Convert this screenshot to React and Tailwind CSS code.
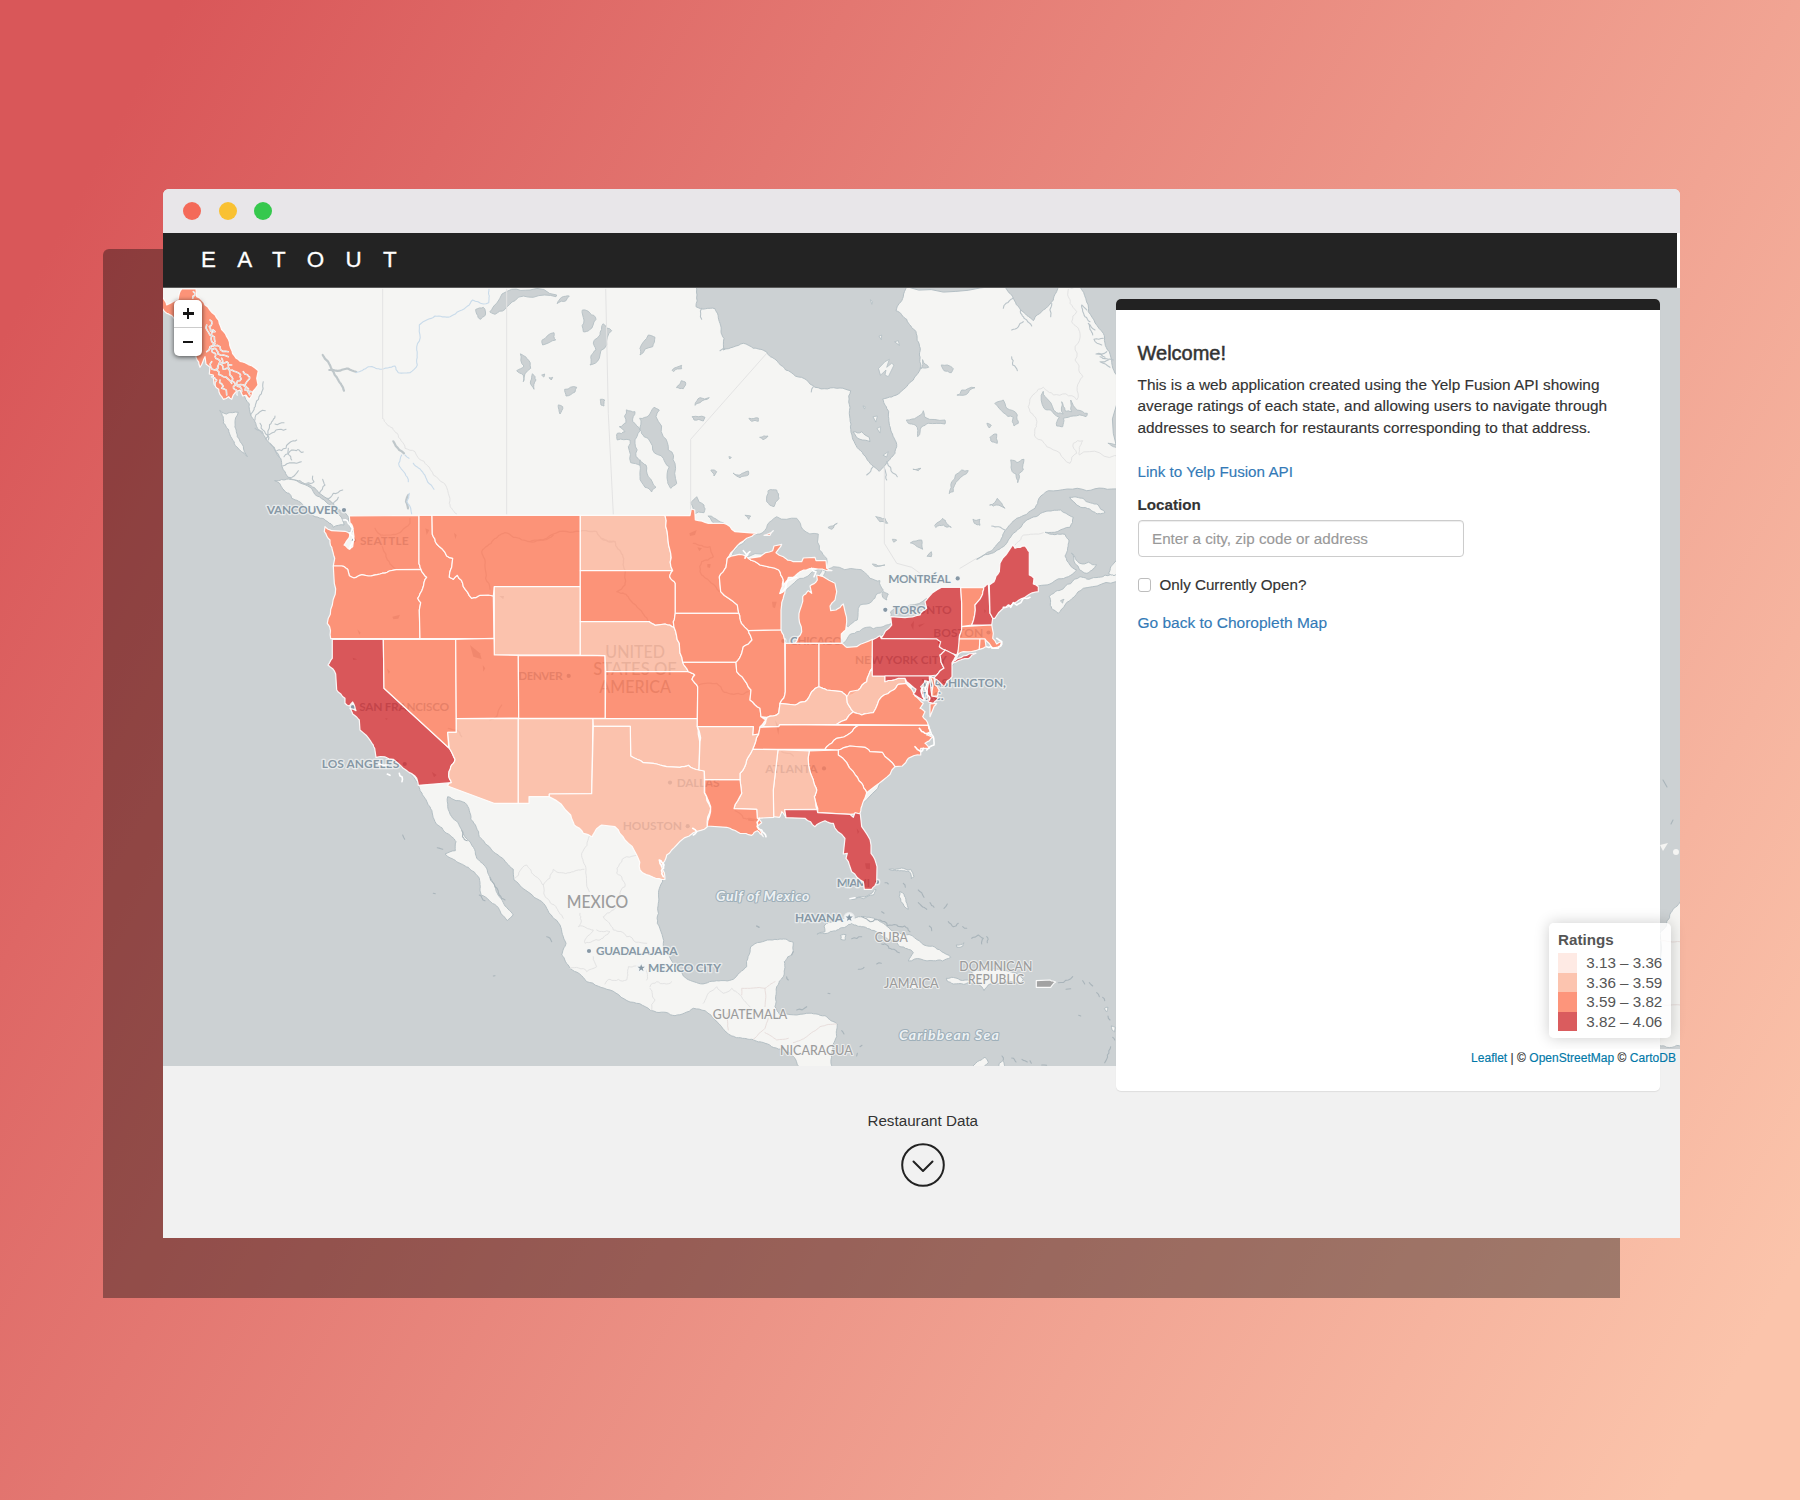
import React from "react";

/* ---------- geometry helpers ---------- */

// Origins of the survey sheets; sheet units are thirds of a pixel.
const NW = [160, 280];
const NE = [640, 280];
const W = [300, 490];
const E = [680, 490];
const S = [380, 780];
const SE = [740, 780];

function pts(...pairs) {
  const out = [];
  for (let i = 0; i < pairs.length; i += 2) {
    const [ox, oy] = pairs[i];
    for (const p of pairs[i + 1].trim().split(/\s+/)) {
      const [x, y] = p.split(",").map(Number);
      out.push([ox + x / 3, oy + y / 3]);
    }
  }
  return out;
}

function noise(a, b) {
  const v = Math.sin(a[0] * 12.9898 + a[1] * 78.233 + b[0] * 37.719 + b[1] * 11.137) * 43758.5453;
  return (v - Math.floor(v)) * 2 - 1;
}

function bend(a, b, amp, depth, borders) {
  const dx = b[0] - a[0];
  const dy = b[1] - a[1];
  const len = Math.hypot(dx, dy);
  if (depth === 0 || len < 3 || len > 130) return [];
  if (borders && depth === 2 && (Math.abs(dx) < 2 || Math.abs(dy) < 2 || len > 32)) return [];
  const flip = a[0] > b[0] || (a[0] === b[0] && a[1] > b[1]);
  const k = (flip ? -noise(b, a) : noise(a, b)) * amp;
  const m = [(a[0] + b[0]) / 2 - dy * k, (a[1] + b[1]) / 2 + dx * k];
  return [...bend(a, m, amp, depth - 1), m, ...bend(m, b, amp, depth - 1)];
}

function toPath(list, { amp = 0, depth = 3, closed = true, borders = false } = {}) {
  const out = [];
  list.forEach((p, i) => {
    out.push(p);
    const n = list[i + 1] || (closed ? list[0] : null);
    if (n && amp) out.push(...bend(p, n, amp, depth, borders));
  });
  return "M" + out.map((p) => p[0].toFixed(1) + " " + p[1].toFixed(1)).join("L") + (closed ? "Z" : "");
}

/* ---------- land and water ---------- */

const mainland = toPath(
  pts(
    NW, "-30,10 -30,90 9,85 60,90 130,150 200,230 240,300 262,365 268,372 272,405 290,440 318,478 345,510 362,535 366,560 385,592 420,602 450,615 478,640 500,655 525,680 548,694 566,712 578,755",
    W, "110,140 115,440 150,640 300,800 356,884",
    S, "115,15 130,48 150,80 168,130 200,160 228,185 226,212 195,222 230,245 265,262 298,295 303,345 350,378 382,422 400,405 370,368 345,320 322,270 290,235 270,185 245,150 215,110 203,80 203,50 255,68 268,92 272,118 298,170 335,210 360,230 400,268 402,300 450,340 500,385 540,435 558,490 545,525 570,565 620,605 690,630 760,667 830,697 885,707 940,685 975,692 1005,720 1035,752 1070,773 1115,778",
    SE, "75,790 130,808 165,835 185,870 278,870 275,820 290,770 292,732 255,707 200,700 120,705",
    S, "1185,680 1190,620 1210,590 1213,545 1238,520 1240,487 1200,477 1140,487 1112,500 1100,560 1060,598 1010,602 955,610 910,588 880,550 850,500 832,430 835,370 840,320 850,290",
    W, "1080,1100 1200,990",
    E, "220,970 400,960 530,960 640,820 735,720 690,600 800,540 860,440 930,390 970,340 1050,310",
    NE, "1195,918 1230,912 1285,890 1310,870 1290,855 1275,828 1287,780 1275,763 1215,757 1290,742 1300,712 1262,690 1215,695 1160,720 1120,760 1090,800 1055,820 1010,838 1055,812 1080,785 1095,752 1130,715 1185,685 1197,655 1225,632 1340,632 1440,630 1440,290 1425,280 1408,215 1390,160 1345,95 1320,20 1255,20 1240,60 1210,90 1180,122 1142,90 1120,55 1095,20 800,20 790,50 768,92 800,118 828,155 841,205 843,258 820,300 780,338 728,357 746,395 752,450 770,500 765,520 740,548 718,574 696,556 662,512 636,465 628,400 632,332 600,324 525,322 500,300 437,270 408,240 380,216 340,205 310,190 250,210 252,175 240,130 225,86 168,80 165,10"
  ),
  { amp: 0.09 }
);

const islands = [
  pts(NW, "345,602 385,597 450,622 478,650 505,672 530,690 552,735 520,742 480,715 430,680 395,655 372,630"),
  pts(NW, "180,392 200,402 235,397 225,430 232,470 262,530 235,505 210,465 190,430"),
  pts(NE, "640,456 665,455 688,472 690,485 660,478"),
  pts(NE, "1440,868 1395,885 1340,897 1320,890 1262,930 1228,950 1235,985 1255,1000 1275,975 1330,925 1440,905"),
  pts(NE, "1440,820 1425,845 1405,880 1440,885"),
  pts(NE, "1290,652 1330,655 1375,675 1395,697 1360,695 1310,675"),
  pts(NE, "1295,820 1320,850 1370,855 1340,880 1305,850"),
  pts(SE, "232,462 255,455 252,438 285,422 330,415 380,412 430,430 480,460 545,490 605,515 632,532 580,542 505,543 520,518 480,500 470,480 420,462 370,440 335,430 300,445 262,460"),
  pts(SE, "620,595 660,600 690,602 695,575 740,568 800,572 850,598 842,612 790,606 750,612 732,632 715,612 680,610 640,612 622,603"),
  pts(SE, "495,612 530,612 545,622 520,628"),
  pts(SE, "302,466 318,464 316,480 302,478"),
  pts(SE, "480,335 492,342 498,365 505,388 492,378 478,350"),
  pts(SE, "448,268 490,265 512,268 522,290 514,296 508,275 470,272"),
  pts(SE, "650,495 672,488 668,499 652,502"),
  pts(SE, "690,862 712,845 735,832 745,848 728,870 690,870"),
  pts(SE, "778,870 778,850 788,842 794,870"),
  pts(SE, "1094,685 1104,682 1100,696"),
  pts(SE, "1115,738 1126,742 1124,756 1116,750"),
  pts(SE, "332,358 365,350 395,340 408,328 400,345 370,356"),
  pts([1400, 760], "860,400 840,425 815,455 800,490 780,520 760,860 800,862 860,860"),
].map((p) => toPath(p, { amp: 0.14 }));

const lakes = [
  pts(E, "142,205 165,178 190,160 240,132 262,105 290,80 350,85 368,118 415,132 418,180 440,205 438,245 400,210 340,220 290,200 205,200"),
  pts(E, "440,240 460,230 530,238 570,265 600,272 610,300 590,312 575,335 540,345 532,390 505,410 490,400 440,365 470,320 465,280 430,262"),
  pts(E, "425,235 370,265 335,285 305,320 303,420 318,460 352,464 370,425 365,370 385,310 415,275"),
  pts(E, "484,465 505,440 530,425 560,412 600,412 635,400 625,425 578,452 530,476 500,474"),
  pts(E, "632,365 660,352 690,345 740,325 745,355 720,378 675,385 632,382"),
  pts(E, "610,305 625,312 620,330 608,322"),
  pts(NW, "990,95 1010,70 1055,28 1110,30 1190,45 1188,50 1120,52 1065,62 1035,88 1005,103"),
  pts(NW, "948,88 970,82 976,105 962,118 950,102"),
  pts(NW, "1192,70 1205,52 1228,48 1218,62"),
  pts(NW, "1268,90 1290,100 1308,118 1288,150 1270,155 1272,120"),
  pts(NW, "1330,132 1355,152 1340,195 1318,235 1290,255 1292,232 1308,210 1302,182 1320,165"),
  pts(NW, "1147,180 1182,158 1187,180 1148,195"),
  pts(NW, "1082,222 1100,235 1112,265 1090,305 1090,285 1070,272 1092,258"),
  pts(NW, "1118,282 1128,300 1122,328 1112,302"),
  pts(NW, "1215,328 1250,322 1245,336 1218,348"),
  pts(NW, "1196,375 1208,380 1200,402"),
  pts(NW, "1146,285 1154,282 1152,290"),
  pts(NW, "1168,293 1178,292 1174,300"),
  pts(NW, "1322,358 1334,360 1332,378 1323,375"),
  pts(NW, "1400,390 1425,395 1418,425 1440,452 1425,490 1428,530 1440,545 1440,556 1412,548 1405,500 1410,480 1372,480 1372,460 1395,455 1378,440 1398,428"),
  pts(NE, "0,415 25,408 42,382 58,390 48,410 70,470 85,510 105,550 110,610 92,625 83,605 88,560 70,535 38,510 12,470 0,450"),
  pts(NE, "0,540 18,555 25,590 48,622 35,636 15,622 0,590"),
  pts(NE, "0,205 25,165 45,172 38,200 0,225"),
  pts(NE, "97,270 125,256 125,266 102,274"),
  pts(NE, "110,322 124,302 136,306 130,326"),
  pts(NE, "165,375 180,353 208,353 180,368"),
  pts(NE, "157,410 195,412 190,423 162,420"),
  pts(NE, "328,415 355,414 355,424 335,424"),
  pts(NE, "360,472 384,468 370,480"),
  pts(NE, "214,570 230,575 222,588"),
  pts(NE, "268,530 274,532 270,536"),
  pts(NE, "280,580 300,585 325,573 325,585 300,593"),
  pts(NE, "385,632 410,630 417,655 402,680 380,665"),
  pts(NE, "152,668 170,650 192,675 192,698 160,702"),
  pts(NE, "205,708 235,722 260,738 230,738"),
  pts(NE, "316,706 332,708 326,718"),
  pts(NE, "565,742 592,730 575,748"),
  pts(NE, "800,420 830,412 850,392 855,412 915,420 915,432 865,430 845,440 833,470 826,435 805,430"),
  pts(NE, "905,255 922,255 940,266 934,278 912,272"),
  pts(NE, "848,240 866,262 842,266"),
  pts(NE, "952,345 965,330 1005,323 985,338"),
  pts(NE, "1065,370 1090,360 1100,385 1132,405 1135,430 1122,438 1120,412 1090,398"),
  pts(NE, "1050,472 1070,462 1072,490 1052,482"),
  pts(NE, "1042,430 1054,436 1048,444"),
  pts(NE, "928,640 935,605 965,570 985,572 955,600 940,635"),
  pts(NE, "885,735 908,715 920,730 934,742 910,735 888,742"),
  pts(NE, "1000,718 1020,718 1020,736 1003,730"),
  pts(NE, "1050,675 1072,655 1095,685 1070,675"),
  pts(NE, "708,710 735,715 743,730 720,725"),
  pts(NE, "758,778 770,780 762,786"),
  pts(NE, "812,788 845,780 848,808 832,800"),
  pts(NE, "698,852 735,855 710,860"),
  pts(NE, "862,828 874,815 874,830"),
  pts(NE, "1210,335 1225,360 1250,398 1270,402 1265,365 1275,392 1295,395 1292,360 1312,390 1342,400 1338,410 1300,408 1270,415 1268,440 1250,438 1258,412 1232,390 1212,385"),
  pts(NE, "1113,540 1130,548 1152,538 1150,570 1136,582 1133,608 1128,582 1115,570"),
  pts(NE, "820,568 843,565 835,572"),
  pts(NE, "1405,490 1440,492 1440,500 1420,500"),
  pts(NE, "1262,962 1272,958 1268,968"),
].map((p) => toPath(p, { amp: 0.16, depth: 2 }));

const seaSpecks = [
  "716,265 735,245 748,238 740,262 755,250 762,255 745,290 735,285 738,270 722,285", "765,185 775,182 778,195", "718,168 725,165 724,178",
  "730,525 745,515 740,530", "712,445 722,440 720,458", "700,410 712,408 708,425", "692,60 698,65 696,72", "670,378 676,380 674,386",
].map((s) => toPath(pts(NE, s)));

const islets = [
  "535,330 545,338 552,352", "535,368 545,378 560,388", "570,368 582,382", "568,438 575,452", "625,425 640,440 655,430", "612,385 622,372",
  "668,440 680,445", "695,475 715,465 730,475 725,492", "740,470 742,488", "355,568 372,562", "410,552 424,550", "435,308 445,312", "425,395 432,400",
  "425,492 455,508 478,518", "955,608 985,600 998,590", "978,628 992,626", "1028,602 1034,612", "1048,608 1058,618", "1070,638 1078,650", "1088,652 1094,662",
  "1104,708 1110,720", "1118,772 1124,780", "1112,800 1102,825 1094,848", "786,828 790,840", "815,834 828,846", "846,838 855,842 862,846", "870,842 874,850",
  "905,855 920,856", "305,752 312,762", "360,800 366,796", "140,590 145,600", "155,525 160,515", "170,690 200,680", "350,828 352,820", "264,640 270,641", "1016,706 1022,708",
  "50,438 58,442", "335,476 365,470", "365,410 420,420 470,435 510,455", "490,310 496,322",
].map((s) => toPath(pts(SE, s), { closed: false, amp: 0.2 }));

const pacificIslets = [
  "330,292 345,320 358,345 375,360", "500,470 515,485", "68,165 74,178", "160,340 166,341", "172,203 188,208", "340,588 345,587", "245,152 262,182",
  "1130,438 1136,442", "298,345 315,362",
].map((s) => toPath(pts(S, s), { closed: false, amp: 0.2 }));

const fjords = [
  "272,405 288,370 300,345 310,305", "285,420 300,395 316,392", "318,478 328,445 345,408", "325,465 348,450 378,448", "345,432 372,428", "350,512 378,505 400,482 410,480",
  "372,530 395,510 430,516", "368,558 395,548 424,545", "385,592 405,585 415,572", "440,610 462,605 458,588", "478,640 495,615 488,598", "500,655 520,640 548,630",
  "520,675 535,652", "285,445 310,462", "300,430 325,480", "330,490 358,530", "395,540 385,505",
].map((s) => toPath(pts(NW, s), { closed: false, amp: 0.2 }));

const fjordsEast = [
  "1340,90 1325,75 1335,110 1350,125", "1365,150 1345,130 1358,165", "1390,175 1362,178 1385,195", "1400,215 1368,222 1395,232", "1405,240 1380,245 1410,262", "1380,230 1420,240",
  "1120,55 1098,70 1090,85", "1142,90 1160,120 1175,138", "1150,125 1115,150", "1235,70 1232,110", "700,560 680,585", "740,545 760,580 772,590", "733,560 740,600",
  "185,85 185,118", "520,320 514,336", "255,205 240,212", "1115,230 1118,255 1132,272", "1055,738 1095,750",
].map((s) => toPath(pts(NE, s), { closed: false, amp: 0.16 }));

const thickRivers = [
  pts(NW, "488,225 515,268 535,300 552,332"), pts(NW, "508,270 540,272 565,266 588,275"), pts(NW, "700,484 718,510 732,520"), pts(NW, "745,645 738,665 744,685"),
].map((p) => toPath(p, { closed: false, amp: 0.08 }));

const rivers = [
  pts(NW, "588,278 625,260 660,268 705,258 715,278 750,278 772,255 770,210 778,135 800,120 825,108 870,110 900,92 938,60 970,72 986,68 987,28"),
  pts(NW, "725,525 716,550 735,580 745,605"), pts(NW, "735,525 747,535"), pts(NW, "760,550 790,580 822,628"), pts(NW, "748,640 740,665 752,685 755,702"),
].map((p) => toPath(p, { closed: false, amp: 0.1 }));

const provinceLines = [
  toPath(pts(NW, "668,28 668,415"), { closed: false }),
  toPath(pts(NW, "668,415 680,432 712,460 735,505 765,515 800,555 850,608 865,640 868,670 890,702"), { closed: false, amp: 0.14 }),
  toPath(pts(NW, "1040,28 1040,702"), { closed: false }),
  toPath(pts(NW, "1337,28 1345,400 1360,702"), { closed: false }),
  toPath(pts(NE, "380,220 152,478 152,700"), { closed: false }),
  toPath(pts(NE, "733,560 733,790 770,850 815,862 840,880"), { closed: false }),
  toPath(pts(NE, "1285,28 1290,70 1310,95 1295,125 1320,160 1305,240 1328,290 1310,360 1240,345 1210,322 1185,340 1170,395 1190,430 1185,470 1220,500 1290,550 1310,520 1300,490 1328,482 1318,525 1440,528"), { closed: false, amp: 0.18 }),
  toPath(pts(NE, "960,865 1010,835"), { closed: false }),
  toPath(pts(NE, "1125,795 1150,765 1210,758"), { closed: false, amp: 0.1 }),
  toPath(pts(S, "628,168 605,220 618,270 628,335"), { closed: false, amp: 0.1 }),
  toPath(pts(S, "405,295 440,255 462,285 490,315 520,268 570,278 612,268"), { closed: false, amp: 0.14 }),
  toPath(pts(S, "490,315 495,350 530,385 550,415"), { closed: false, amp: 0.14 }),
  toPath(pts(S, "770,225 740,230 710,280 735,320 720,345 705,385 670,410 700,450 740,470 800,490"), { closed: false, amp: 0.18 }),
  toPath(pts(S, "600,400 595,440 640,450 615,490 660,480 690,455 650,450"), { closed: false, amp: 0.2 }),
  toPath(pts(S, "570,565 620,575 650,560 640,530"), { closed: false, amp: 0.16 }),
  toPath(pts(S, "675,612 690,598 740,600 745,560 790,560 800,600"), { closed: false, amp: 0.2 }),
  toPath(pts(S, "810,625 825,660 815,690"), { closed: false, amp: 0.16 }),
  toPath(pts(S, "810,620 830,605 875,605"), { closed: false, amp: 0.18 }),
  toPath(pts(S, "970,670 990,635 1010,620 1030,640 1055,625 1085,650 1110,680"), { closed: false, amp: 0.1 }),
];

const countryLines = [
  pts(S, "1085,645 1085,625 1155,625 1155,680"), pts(S, "1155,625 1185,605"), pts(S, "1045,750 1042,700"), pts(S, "1120,778 1155,745 1165,715"), pts(S, "1155,758 1190,780 1225,775"),
  pts(SE, "160,788 200,770 240,740 290,732"), pts([1400, 760], "780,540 840,545"), pts([1400, 760], "780,735 840,735"),
].map((p) => toPath(p, { closed: false, amp: 0.06 }));

/* ---------- states ---------- */

const RATING = { peach: "#fcb59b", orange: "#fe7a59", red: "#d22f33", none: "#8d8d8d" };

const states = [
  ["orange", pts(NW, "5,50 20,75 45,62 55,58 65,27 108,27 110,50 135,75 165,105 182,140 200,170 212,205 228,235 255,248 295,272 290,295 294,315 268,357 258,345 248,348 240,330 228,335 215,358 206,350 190,358 176,328 162,312 160,285 148,282 150,262 138,252 135,230 120,262 108,232 100,200 40,112 20,100 5,80")],
  ["orange", pts(W, "148,78 357,76 357,215 363,238 289,239 268,243 240,252 205,258 185,254 162,264 148,257 143,238 125,228 100,228 104,205 97,180 90,150 73,125 75,110 95,122 135,124 150,130 148,142 132,165 148,178 158,170 162,140 158,110 150,98")],
  ["orange", pts(W, "100,228 125,228 143,238 148,257 162,264 185,254 205,258 240,252 268,243 289,239 363,238 380,262 368,295 353,325 362,338 358,360 360,446 92,446 82,400 97,345 103,280")],
  ["orange", pts(W, "357,76 396,76 397,133 410,162 440,198 458,205 455,232 448,262 460,268 472,256 490,290 515,325 540,316 565,315 580,318 582,445 360,446 358,360 362,338 353,325 368,295 380,262 363,238 357,215")],
  ["orange", pts(W, "396,76 841,76 841,290 583,290 580,318 565,315 540,316 515,325 490,290 472,256 460,268 448,262 455,232 458,205 440,198 410,162 397,133")],
  ["peach", pts(W, "583,290 841,290 841,495 583,495")],
  ["red", pts(W, "97,448 250,448 252,595 448,775 465,808 452,830 446,858 454,878 355,886 345,858 310,835 280,808 228,802 224,775 213,755 180,720 178,690 158,672 150,655 168,662 158,636 148,648 135,640 135,625 110,600 107,552 84,525 97,505")],
  ["orange", pts(W, "250,448 467,448 469,727 443,727 446,773 252,595")],
  ["orange", pts(W, "467,448 582,445 583,495 655,496 656,684 469,686")],
  ["orange", pts(W, "655,496 915,497 916,685 656,685")],
  ["peach", pts(W, "469,686 655,686 655,940 582,940 443,888 446,880 454,878 446,858 452,830 465,808 448,775 443,727 469,727")],
  ["peach", pts(W, "655,686 879,686 875,911 748,912 748,920 687,920 687,940 655,940")],
  ["peach", pts(W, "841,76 1095,76 1103,140 1112,190 1118,242 841,242")],
  ["orange", pts(W, "841,242 1118,242 1109,260 1126,280 1126,370 1120,395 1122,412 1095,402 1065,406 1048,395 841,395")],
  ["peach", pts(W, "841,395 1048,395 1065,406 1095,402 1122,412 1138,460 1148,517 1165,545 917,545 915,497 841,495")],
  ["orange", pts(W, "917,545 1165,545 1184,555 1176,568 1193,590 1192,686 916,686")],
  ["peach", pts(W, "879,686 1192,686 1192,710 1199,755 1197,840 1165,826 1140,832 1100,830 1060,820 1030,818 992,798 991,709 880,709")],
  ["peach", pts(W, "880,709 991,709 992,798 1030,818 1060,820 1100,830 1140,832 1165,826 1197,840 1213,843 1213,908 1232,955 1222,1010 1180,1028 1130,1065 1100,1095 1085,1130 1095,1168 1060,1162 1020,1140 1010,1095 975,1050 945,1010 905,1005 887,1020 877,1040 850,1030 823,1005 812,975 748,920 748,912 875,911")],
  ["orange", pts(E, "-45,76 30,77 34,57 44,60 46,90 85,100 130,100 165,125 230,130 200,145 165,175 142,205 138,232 118,260 122,305 172,345 176,370 -14,370 -14,280 -31,260 -22,242 -28,190 -37,140")],
  ["orange", pts(E, "142,205 190,195 205,205 240,225 296,240 310,270 300,310 318,292 312,315 303,360 303,420 205,422 184,400 176,370 172,345 122,305 118,260 138,232")],
  ["orange", pts(E, "205,205 240,200 278,182 282,168 305,163 288,188 310,200 340,215 365,215 370,204 405,202 408,212 438,212 440,235 456,242 400,235 360,245 340,262 325,262 310,285 310,270 296,240 240,225")],
  ["orange", pts(E, "345,460 365,425 357,370 368,320 385,302 395,310 390,288 412,270 410,255 430,260 465,280 470,305 465,330 450,348 452,362 468,360 490,342 500,395 497,420 484,432 484,460 417,460")],
  ["orange", pts(E, "252,136 280,122 270,136")],
  ["orange", pts(E, "-14,370 176,370 184,400 205,422 216,450 190,470 185,490 168,517 8,517 -2,460 -18,412 -20,395")],
  ["orange", pts(E, "8,517 168,517 170,545 200,580 213,600 210,630 240,655 243,680 258,690 240,710 236,732 218,735 220,710 52,710 53,590 36,568 44,555 25,545")],
  ["orange", pts(E, "205,422 303,420 314,450 316,605 300,640 296,670 262,682 243,680 240,655 210,630 213,600 200,580 170,545 168,517 185,490 190,470 216,450")],
  ["orange", pts(E, "316,460 417,460 417,590 395,605 375,635 345,645 300,640 316,605")],
  ["orange", pts(E, "417,460 484,460 500,472 530,470 578,448 576,535 560,575 535,600 500,620 485,605 440,600 417,590")],
  ["peach", pts(E, "258,690 262,682 296,670 300,640 345,645 375,635 395,605 417,590 440,600 485,605 500,620 502,638 520,665 470,703 300,704 296,710 250,710")],
  ["peach", pts(E, "576,535 578,558 615,558 615,575 655,565 675,565 678,580 655,583 640,600 605,620 580,668 545,675 520,665 502,638 500,620 510,605 535,600 560,575")],
  ["orange", pts(E, "470,703 520,665 545,675 580,668 605,620 640,600 655,583 678,580 705,618 730,640 720,655 735,665 728,680 738,690 745,706")],
  ["orange", pts(E, "240,712 296,710 300,704 536,706 510,730 470,745 440,770 435,778 218,778 236,732")],
  ["orange", pts(E, "536,706 745,706 752,725 740,735 758,742 735,760 748,775 722,775 722,795 685,805 667,828 645,830 607,787 570,785 555,772 510,768 475,780 435,778 440,770 470,745 510,730")],
  ["orange", pts(E, "475,780 510,768 555,772 570,785 607,787 645,830 610,870 560,908 545,880 520,845 475,795")],
  ["orange", pts(E, "388,783 475,780 475,795 520,845 545,880 560,908 548,940 540,970 510,973 413,968 403,920 410,900 400,870")],
  ["peach", pts(E, "294,779 388,783 400,870 410,900 403,920 411,958 314,959 318,983 305,965 298,982 281,980 280,900")],
  ["peach", pts(E, "218,778 294,779 280,900 281,982 232,985 230,958 162,956 185,910 180,869 180,850 200,810")],
  ["orange", pts(E, "74,869 180,869 185,910 162,956 230,958 232,985 245,998 232,1010 250,1040 232,1022 215,1036 180,1030 150,1015 140,1012 82,1008 92,950 74,908")],
  ["peach", pts(E, "52,710 220,710 218,735 236,732 218,778 200,810 180,850 180,869 74,869 73,843 57,840 60,755")],
  ["red", pts(E, "314,959 411,958 413,968 510,973 520,982 525,968 541,972 545,1010 573,1065 573,1090 591,1130 590,1175 575,1198 553,1198 550,1175 515,1145 498,1105 502,1090 490,1092 495,1045 460,1000 435,992 405,1010 375,985 318,983")],
  ["red", pts(E, "604,445 635,405 632,380 675,383 720,375 740,355 735,335 785,292 842,292 845,340 845,410 838,447 830,495 795,480 778,470 770,447")],
  ["red", pts(E, "818,515 850,498 888,490 865,506 824,518")],
  ["red", pts(E, "577,450 600,437 604,446 770,447 782,455 778,470 795,480 780,495 792,535 770,555 748,558 577,558")],
  ["red", pts(E, "795,480 828,500 816,518 816,560 792,590 762,565 770,555 792,535 780,495")],
  ["red", pts(E, "615,558 748,558 756,618 775,622 760,640 745,636 742,600 746,575 734,572 722,590 732,632 700,612 708,598 680,575 675,565 655,565 615,575")],
  ["orange", pts(E, "750,558 762,565 765,585 778,600 772,618 756,618")],
  ["orange", pts(E, "750,642 770,640 758,660 750,680")],
  ["orange", pts(E, "842,293 911,292 905,318 885,345 875,405 845,410 845,340")],
  ["red", pts(E, "911,292 925,280 930,370 938,385 935,405 875,405 885,345 905,318")],
  ["red", pts(E, "928,285 942,275 958,245 960,220 998,165 1005,175 1035,168 1048,185 1048,255 1062,265 1060,282 1075,290 1075,305 1040,318 1010,335 970,355 945,385 938,385 930,370")],
  ["orange", pts(E, "845,410 935,405 940,430 938,445 950,462 965,455 960,470 935,475 915,447 838,447")],
  ["orange", pts(E, "838,447 900,447 898,478 850,485 833,495")],
  ["orange", pts(E, "900,447 915,447 918,470 898,478")],
  ["none", pts(SE, "889,602 930,600 947,606 932,622 889,622")],
].map(([tone, p]) => ({ tone, d: toPath(p, { amp: 0.1, depth: 2, borders: true }) }));

const inlets = [
  "150,120 148,140 165,155 155,185 180,200 205,215", "165,190 150,200 165,230 178,250 200,245 215,255", "140,215 165,205 190,225 205,230", "178,250 170,270 190,290 215,310",
  "205,260 215,290 225,310 232,345", "215,270 240,290 230,310 245,335", "250,275 265,300 255,330 275,335", "155,245 165,270 175,262", "185,235 190,268 210,270",
  "155,290 170,300 165,315", "180,300 185,325 200,345", "235,315 260,322 270,345", "100,35 98,55", "140,135 150,165 165,185",
].map((s) => toPath(pts(NW, s), { closed: false, amp: 0.35 }));

const coastFrills = [
  toPath(pts(W, "130,90 150,105 158,115 148,130 162,150 150,176"), { closed: false, amp: 0.2 }),
  toPath(pts(E, "970,352 985,345 992,352 1000,338 1010,345 1030,325 1050,322"), { closed: false, amp: 0.25 }),
  toPath(pts(E, "728,592 725,610 735,628"), { closed: false, amp: 0.2 }),
  toPath(pts(E, "742,575 740,610 748,630"), { closed: false, amp: 0.2 }),
  toPath(pts(E, "745,706 760,740 762,765 740,780"), { closed: false, amp: 0.1 }),
  toPath(pts(E, "705,770 722,785 730,775"), { closed: false, amp: 0.2 }),
  toPath(pts(E, "718,715 735,730 752,735"), { closed: false, amp: 0.2 }),
  toPath(pts(E, "190,182 200,195 210,185 195,205"), { closed: false, amp: 0.2 }),
  toPath(pts(E, "300,310 318,282 335,268 350,262"), { closed: false, amp: 0.2 }),
  toPath(pts(E, "395,235 408,245 402,260"), { closed: false, amp: 0.2 }),
  toPath(pts(E, "950,445 965,455 962,468 945,475 920,470"), { closed: false, amp: 0.2 }),
  toPath(pts(E, "238,985 232,1010 245,1020 258,1040"), { closed: false, amp: 0.2 }),
  toPath(pts(W, "262,852 270,856"), { closed: false }),
  toPath(pts(W, "298,850 306,875"), { closed: false, amp: 0.3 }),
  toPath(pts(W, "235,822 265,825"), { closed: false, amp: 0.1 }),
  toPath(pts(W, "1178,1015 1190,1025 1180,1035"), { closed: false, amp: 0.2 }),
  toPath(pts(W, "1085,1130 1078,1110 1092,1125 1090,1160"), { closed: false, amp: 0.2 }),
  toPath(pts(SE, "330,356 345,353"), { closed: false }),
];

const inlandWater = [
  pts(W, "510,465 540,490 545,508 520,500"), pts(W, "548,525 556,535 550,545"), pts(W, "260,535 270,545 266,552"), pts(W, "277,380 300,374 295,386 280,388"),
  pts(W, "172,418 182,428 178,434"), pts(W, "598,318 612,318 610,328"), pts(W, "376,115 388,120 380,135"), pts(W, "462,128 470,135 466,148"),
  pts(W, "158,503 172,508 160,510"), pts(W, "395,845 410,855 402,862"), pts(W, "256,684 264,686 258,690"), pts(E, "28,130 50,120 45,135 30,138"), pts(E, "52,172 66,175 58,184"),
  pts(E, "82,222 92,222 90,234 82,232"), pts(E, "276,335 290,335 285,355 278,352"), pts(E, "555,1120 570,1120 570,1138 558,1136"), pts(E, "530,1015 538,1025 533,1032"),
  pts(E, "912,358 918,362 914,370"), pts(E, "203,985 225,986 222,994 205,992"), pts(E, "285,690 298,712 295,735"), pts(E, "692,405 702,392 700,420"), pts(E, "712,390 722,415"), pts(E, "715,405 735,400 718,412"),
].map((p) => toPath(p));

const inlandRivers = [
  pts(W, "570,298 555,230 545,185 580,150 615,128 640,142 690,155 740,145 760,132 840,124 890,125 910,150 945,155"),
  pts(W, "905,145 945,155 968,195 975,240 975,285 950,305 985,320 1015,355 1045,395"), pts(W, "690,155 730,150 760,135"),
  pts(W, "225,115 245,140"), pts(W, "245,135 300,128 330,100 330,85"), pts(W, "245,160 260,205 285,235"), pts(W, "570,690 590,680 605,645"), pts(W, "445,715 470,720 485,740"),
  pts(E, "40,160 90,170 100,200 65,215 60,245 90,275 118,305"), pts(E, "56,585 110,580 130,605 165,612 205,605"), pts(E, "305,785 330,790 340,798"), pts(E, "165,962 190,985 230,990"),
].map((p) => toPath(p, { closed: false, amp: 0.12 }));

/* ---------- labels ---------- */

const cities = [
  ["VANCOUVER", 266.7, 514, 71.6, 344, 510], ["SEATTLE", 360, 545, 48.7, 354, 540.3], ["SAN FRANCISCO", 359.3, 711.3, 90, 353, 707],
  ["LOS ANGELES", 321.7, 768, 77.6, 404.7, 764], ["DENVER", 518.3, 680, 44.4, 568.7, 675.9], ["DALLAS", 676.7, 786.7, 42.8, 670, 782.6],
  ["HOUSTON", 622.7, 830.3, 59.3, 687.7, 826.2], ["CHICAGO", 790, 645.2, 52.3, 783.3, 641], ["MONTRÉAL", 888.3, 582.7, 62.4, 957.7, 578.4],
  ["TORONTO", 892.7, 614.2, 59, 885.3, 609.8], ["BOSTON", 933.3, 636.8, 50, 988.5, 632.5], ["NEW YORK CITY", 855, 664.2, 91.7, 0, 0],
  ["WASHINGTON,", 921.7, 686.9, 84, 0, 0], ["D.C.", 921.7, 699.7, 22, 0, 0], ["ATLANTA", 765.3, 772.7, 52.4, 824, 768.4], ["MIAMI", 836.7, 886.5, 33.3, 877, 882],
  ["GUADALAJARA", 596, 955.2, 81.7, 589, 951],
];

const capitals = [["MEXICO CITY", 648, 971.5, 73, 641.2, 968], ["HAVANA", 795, 922.2, 48, 849.2, 917.8]];

const countries = [
  ["UNITED", 605.3, 658.2, 59.7, 17.8], ["STATES OF", 593.3, 675.3, 83.4, 17.8], ["AMERICA", 599.3, 693, 71.7, 17.8], ["MEXICO", 566.7, 908.2, 61.6, 17.8],
  ["GUATEMALA", 712.7, 1019, 74.6, 14], ["NICARAGUA", 780, 1055.4, 72.7, 14], ["CUBA", 874.7, 942.2, 33, 14], ["JAMAICA", 884, 987.5, 54.7, 14],
  ["DOMINICAN", 959.3, 971.2, 73, 14], ["REPUBLIC", 968, 984.3, 56, 14],
];

const seas = [["Gulf of Mexico", 716, 900.5, 93.3], ["Caribbean Sea", 899, 1040, 99.7]];

const STAR = "M0-3.8 1 -1.2 3.7-1.2 1.5.5 2.3 3.2 0 1.6-2.3 3.2-1.5.5-3.7-1.2-1-1.2Z";

function BaseMap() {
  return (
    <svg viewBox="163 288 1517 778" className="block h-[778px] w-[1517px]" strokeLinejoin="round" strokeLinecap="round">
      <rect x="163" y="288" width="1517" height="778" fill="#ccd1d3" />
      <g fill="#f5f5f3" stroke="#b4bfc4" strokeWidth="1">
        <path d={mainland} />
        {islands.map((d, i) => <path key={i} d={d} />)}
      </g>
      <g fill="#f5f5f3" stroke="#b4bfc4" strokeWidth=".8">
        {seaSpecks.map((d, i) => <path key={i} d={d} />)}
      </g>
      <g fill="none" stroke="#a9b4ba" strokeWidth="1.1">
        {islets.map((d, i) => <path key={i} d={d} />)}
        {pacificIslets.map((d, i) => <path key={i} d={d} />)}
        <path d="M1663 780l4 7M1671 824l2-4" />
      </g>
      <path d="M1660 845l8-2-5 8zM1673 852a3 3 0 1 0 6 0a3 3 0 1 0-6 0" fill="#f5f5f3" />
      <g fill="#ccd1d3" stroke="#b4bfc4" strokeWidth=".9">
        {lakes.map((d, i) => <path key={i} d={d} />)}
      </g>
      <g fill="none">
        <g stroke="#b9c3c8" strokeWidth="1.1">
          {fjords.map((d, i) => <path key={i} d={d} />)}
          {fjordsEast.map((d, i) => <path key={i} d={d} />)}
        </g>
        <g stroke="#bfc7ca" strokeWidth="2.2">{thickRivers.map((d, i) => <path key={i} d={d} />)}</g>
        <g stroke="#c9dbea" strokeWidth="1.1">{rivers.map((d, i) => <path key={i} d={d} />)}</g>
        <g stroke="#e3e3e3" strokeWidth="1">{provinceLines.map((d, i) => <path key={i} d={d} />)}</g>
        <g stroke="#e8dedc" strokeWidth="1">{countryLines.map((d, i) => <path key={i} d={d} />)}</g>
      </g>

      <g fill="#f5f5f3">{states.map((s, i) => <path key={i} d={s.d} />)}</g>
      <g fill="#bfbabd">{inlandWater.map((d, i) => <path key={i} d={d} />)}</g>
      <g fill="none" stroke="#ccc8ca" strokeWidth="1.3">{inlandRivers.map((d, i) => <path key={i} d={d} />)}</g>

      <g fontFamily="Lato, 'Open Sans', sans-serif" paintOrder="stroke">
        <g fontWeight="700" fontSize="12" fill="#8798a5" stroke="#f3f5f5" strokeOpacity=".7" strokeWidth="2.6">
          {cities.map(([t, x, y, w, cx, cy]) => (
            <g key={t}>
              <text x={x} y={y} textLength={w}>{t}</text>
              {cx > 0 && <circle cx={cx} cy={cy} r="2.1" paintOrder="stroke" />}
            </g>
          ))}
          {capitals.map(([t, x, y, w, cx, cy]) => (
            <g key={t}>
              <text x={x} y={y} textLength={w}>{t}</text>
              <circle cx={cx} cy={cy} r="4.5" fill="#f3f5f5" />
              <path d={STAR} transform={`translate(${cx} ${cy})`} strokeWidth="0" />
            </g>
          ))}
        </g>
        <g fontWeight="500" fill="#9c9c9c" stroke="#f6f6f5" strokeOpacity=".75" strokeWidth="2.2">
          {countries.map(([t, x, y, w, s]) => (
            <text key={t} x={x} y={y} textLength={w} fontSize={s} lengthAdjust="spacingAndGlyphs">{t}</text>
          ))}
        </g>
        <g fontWeight="700" fontStyle="italic" fontSize="14" fill="#eef2f4" stroke="#9fb0ba" strokeWidth="2.2">
          {seas.map(([t, x, y, w]) => <text key={t} x={x} y={y} textLength={w}>{t}</text>)}
        </g>
      </g>

      {states.map((s, i) => (
        <path key={i} d={s.d} fill={RATING[s.tone]} fillOpacity=".8" stroke="#fff" strokeOpacity=".9" strokeWidth="1.2" />
      ))}
      <g fill="none" stroke="#fff" strokeWidth="1.6">
        {inlets.map((d, i) => <path key={i} d={d} />)}
        {coastFrills.map((d, i) => <path key={i} d={d} />)}
      </g>
      <g fill="none" stroke="#c6cfd2" strokeWidth=".6">{inlets.map((d, i) => <path key={i} d={d} />)}</g>
    </svg>
  );
}

/* ---------- interface ---------- */

function TitleBar() {
  return (
    <div className="flex h-11 items-center gap-[17.6px] rounded-t-[6px] bg-[#e8e6e9] pl-5">
      <span className="size-[18px] rounded-full bg-[#f46a59]" />
      <span className="size-[18px] rounded-full bg-[#f9c132]" />
      <span className="size-[18px] rounded-full bg-[#36c84d]" />
    </div>
  );
}

function NavBar() {
  return (
    <div className="h-[55px] bg-white pr-[3px]">
      <div className="flex h-[54.5px] items-center border-b border-[#5a5a5a] bg-[#232323] pl-[38px] pt-px">
        <span className="text-[22.4px] leading-none tracking-[21.4px] text-white [-webkit-text-stroke:0.3px_#fff]">EATOUT</span>
      </div>
    </div>
  );
}

function ZoomControl() {
  return (
    <div className="absolute left-[11px] top-3 w-7 overflow-hidden rounded-[5px] bg-white shadow-[0_1px_5px_rgba(0,0,0,0.65)]">
      <button className="flex h-7 w-full items-center justify-center border-b border-[#ccc]" aria-label="Zoom in">
        <span className="relative block h-[2.4px] w-[11px] bg-[#151515] before:absolute before:left-[4.3px] before:top-[-4.3px] before:h-[11px] before:w-[2.4px] before:bg-[#151515]" />
      </button>
      <button className="flex h-7 w-full items-center justify-center" aria-label="Zoom out">
        <span className="block h-[2.6px] w-[9.5px] bg-[#151515]" />
      </button>
    </div>
  );
}

function WelcomePanel() {
  return (
    <div className="absolute left-[953px] top-[10.5px] h-[792.5px] w-[544px] overflow-hidden rounded-[5px] bg-white text-[15.2px] leading-[21.8px] text-[#333] shadow-[0_1px_1px_rgba(0,0,0,0.08)]">
      <div className="h-[11px] bg-[#222]" />
      <div className="flex flex-col items-start whitespace-nowrap pl-[21.5px] pt-[32px] [-webkit-text-stroke:0.15px]">
        <h4 className="text-[20px] font-normal leading-[22px] [-webkit-text-stroke:0.5px_#333]">Welcome!</h4>
        <p className="mt-[10px] text-[15.36px]">
          This is a web application created using the Yelp Fusion API showing<br />
          average ratings of each state, and allowing users to navigate through<br />
          addresses to search for restaurants corresponding to that address.
        </p>
        <a className="mt-[22px] text-[#337ab7]">Link to Yelp Fusion API</a>
        <label className="mt-[11px] font-bold">Location</label>
        <input
          className="mt-[5px] h-[37px] w-[326.5px] rounded-[4px] border border-[#ccc] px-[13.5px] shadow-[inset_0_1px_1px_rgba(0,0,0,0.075)] placeholder:text-[#999]"
          placeholder="Enter a city, zip code or address"
        />
        <div className="mt-[16.5px] flex items-center">
          <span className="size-[13.5px] rounded-[3px] border border-[#bdbdbd] bg-white" />
          <span className="ml-[8.5px]">Only Currently Open?</span>
        </div>
        <a className="mt-[16.5px] text-[15.5px] text-[#337ab7]">Go back to Choropleth Map</a>
      </div>
    </div>
  );
}

const legendRows = [
  ["3.13 – 3.36", "bg-[#feeae4]"],
  ["3.36 – 3.59", "bg-[#fcc4af]"],
  ["3.59 – 3.82", "bg-[#fd957b]"],
  ["3.82 – 4.06", "bg-[#da5c5e]"],
];

function Legend() {
  return (
    <div className="absolute left-[1386px] top-[635px] h-[114.5px] w-[122px] rounded-[5px] bg-white/80 pl-[9px] pt-[6.5px] text-[15.2px] text-[#555] shadow-[0_0_15px_rgba(0,0,0,0.2)]">
      <h4 className="mb-[3.5px] font-bold leading-[20px]">Ratings</h4>
      {legendRows.map(([range, tone]) => (
        <div key={range} className="flex h-[19.5px] items-center">
          <i className={`h-full w-[19.3px] ${tone}`} />
          <span className="ml-[9px] whitespace-nowrap leading-none">{range}</span>
        </div>
      ))}
    </div>
  );
}

function Attribution() {
  return (
    <div className="absolute right-0 top-[761px] flex h-[17px] w-[214px] items-center justify-end whitespace-nowrap bg-white/70 pr-1 text-[12px] tracking-[0.02px] text-[#333] [-webkit-text-stroke:0.15px]">
      <span>
        <a className="text-[#0078a8]">Leaflet</a> | © <a className="text-[#0078a8]">OpenStreetMap</a> © <a className="text-[#0078a8]">CartoDB</a>
      </span>
    </div>
  );
}

export default function App() {
  return (
    <div className="h-[1500px] w-[1800px] overflow-hidden bg-[linear-gradient(118deg,#d95759_7%,#fbc4ab_95%)] pl-[163px] pt-[189px] font-['Liberation_Sans',Arial,sans-serif]">
      <div className="h-[1049px] w-[1517px] rounded-t-[6px] bg-[#f1f1f1] shadow-[-60px_60px_0_rgba(8,8,8,0.37)]">
        <TitleBar />
        <NavBar />
        <div className="relative h-[778px]">
          <BaseMap />
          <ZoomControl />
          <WelcomePanel />
          <Legend />
          <Attribution />
        </div>
        <div className="flex flex-col items-center pl-[2.5px] pt-[43.5px] text-[15.2px] leading-[22px] text-[#333]">
          <span>Restaurant Data</span>
          <svg className="mt-[11px]" width="44" height="44" viewBox="0 0 44 44" fill="none" stroke="#222" strokeWidth="2" strokeLinecap="round" strokeLinejoin="round">
            <circle cx="22" cy="22" r="20.8" />
            <path d="M12.5 18.5 22 28 31.5 18.5" />
          </svg>
        </div>
      </div>
    </div>
  );
}
